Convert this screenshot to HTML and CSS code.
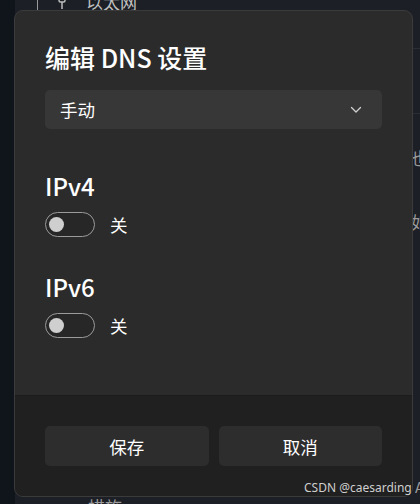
FILE: index.html
```html
<!DOCTYPE html>
<html lang="zh-CN">
<head>
<meta charset="utf-8">
<title>编辑 DNS 设置</title>
<link rel="stylesheet" href="styles.css">
</head>
<body>
<div class="backdrop">
  <div class="rail"></div>
  <div class="page">
    <div class="page-top">
      <span class="vline"></span>
      <svg class="plug" width="12" height="14" viewBox="0 0 12 14"><rect x="3" y="0" width="6" height="7" rx="1.5" fill="none" stroke="#bdbdbd" stroke-width="1.5"/><line x1="6" y1="7" x2="6" y2="14" stroke="#bdbdbd" stroke-width="1.5"/></svg>
      <span class="page-top-text">以太网</span>
    </div>
    <div class="page-right">
      <span class="hline h1"></span>
      <span class="hline h2"></span>
      <span class="frag f1">也</span>
      <span class="frag f2">如</span>
      <span class="frag f3">AF</span>
    </div>
    <span class="page-bottom-text">措施</span>
  </div>
</div>

<div class="dialog">
  <div class="dialog-body">
    <h1 class="dialog-title">编辑 DNS 设置</h1>
    <div class="select">
      <span class="select-text">手动</span>
      <svg class="chevron" width="12" height="8" viewBox="0 0 12 8"><polyline points="1.5,1.5 6,6 10.5,1.5" fill="none" stroke="#d0d0d0" stroke-width="1.3" stroke-linecap="round" stroke-linejoin="round"/></svg>
    </div>
    <section class="group">
      <h2 class="group-title">IPv4</h2>
      <div class="toggle-row">
        <span class="toggle"><span class="knob"></span></span>
        <span class="toggle-label">关</span>
      </div>
    </section>
    <section class="group">
      <h2 class="group-title">IPv6</h2>
      <div class="toggle-row">
        <span class="toggle"><span class="knob"></span></span>
        <span class="toggle-label">关</span>
      </div>
    </section>
  </div>
  <div class="dialog-footer">
    <button class="btn">保存</button>
    <button class="btn">取消</button>
  </div>
</div>

<div class="watermark">CSDN @caesarding</div>
</body>
</html>
```
FILE: styles.css
```css
html, body {
  margin: 0;
  padding: 0;
}
body {
  width: 420px;
  height: 504px;
  overflow: hidden;
  position: relative;
  background: #1b1e23;
  font-family: "Noto Sans CJK SC", "Noto Sans", sans-serif;
  color: #ffffff;
}
.backdrop {
  display: flex;
  height: 504px;
}
.rail {
  width: 15px;
  background: #10141b;
}
.page {
  flex: 1;
  position: relative;
  background: #1c1f25;
}
.page-top {
  display: flex;
  align-items: flex-start;
  height: 12px;
  overflow: hidden;
}
.vline {
  width: 1px;
  height: 12px;
  background: #9a9a9a;
  margin-left: 22px;
}
.plug {
  margin-left: 18px;
  margin-top: -5px;
}
.page-top-text {
  margin-left: 18px;
  margin-top: -11px;
  font-size: 17px;
  color: #bfbfbf;
}
.page-right {
  position: absolute;
  left: 398px;
  top: 0;
  width: 10px;
  height: 504px;
}
.hline {
  position: absolute;
  left: 0;
  width: 10px;
  height: 1px;
  background: #2a2d33;
}
.h1 { top: 48px; }
.h2 { top: 113px; }
.frag {
  position: absolute;
  left: -2px;
  font-size: 17px;
  color: #9a9a9a;
}
.f1 { top: 145px; }
.f2 { top: 209px; }
.f3 { top: 476px; left: 2px; font-size: 15px; }
.page-bottom-text {
  position: absolute;
  left: 73px;
  top: 494px;
  font-size: 17px;
  color: #9a9a9a;
}

.dialog {
  position: absolute;
  left: 14px;
  top: 10px;
  width: 399px;
  height: 487px;
  box-sizing: border-box;
  border: 1px solid #3b3b3b;
  border-radius: 9px;
  background: #2b2b2b;
  overflow: hidden;
  display: flex;
  flex-direction: column;
}
.dialog-body {
  flex: 1;
  padding: 30px 30px 0 30px;
}
.dialog-title {
  margin: 0;
  font-size: 25px;
  line-height: 33px;
  font-weight: 500;
  letter-spacing: 0;
}
.select {
  margin-top: 16px;
  height: 39px;
  box-sizing: border-box;
  background: #373737;
  border-radius: 5px;
  display: flex;
  align-items: center;
  justify-content: space-between;
  padding: 0 20px 0 15px;
}
.select-text {
  font-size: 17.5px;
}
.chevron {
  display: block;
}
.group {
  margin-top: 41px;
}
.group + .group {
  margin-top: 34px;
}
.group-title {
  margin: 0;
  font-size: 24px;
  line-height: 32px;
  font-weight: 500;
}
.toggle-row {
  margin-top: 10px;
  display: flex;
  align-items: center;
  gap: 15px;
}
.toggle {
  width: 50px;
  height: 25px;
  box-sizing: border-box;
  border: 1.25px solid #9b9b9b;
  border-radius: 13px;
  background: #272727;
  display: flex;
  align-items: center;
  padding-left: 3px;
}
.knob {
  width: 15px;
  height: 15px;
  border-radius: 50%;
  background: #cfcfcf;
}
.toggle-label {
  font-size: 17.5px;
}
.dialog-footer {
  height: 101px;
  box-sizing: border-box;
  background: #202020;
  border-top: 1px solid #1c1c1c;
  padding: 30px 30px 0 30px;
  display: grid;
  grid-template-columns: 1fr 1fr;
  column-gap: 10px;
  align-items: start;
}
.btn {
  height: 40px;
  border: 0;
  border-radius: 5px;
  background: #2d2d2d;
  color: #ffffff;
  font-family: "Noto Sans CJK SC", "Noto Sans", sans-serif;
  font-size: 17.5px;
  padding: 0;
}
.watermark {
  position: absolute;
  left: 304px;
  top: 479px;
  font-family: "Noto Sans", sans-serif;
  font-size: 12px;
  color: #cfcfcf;
}
```
